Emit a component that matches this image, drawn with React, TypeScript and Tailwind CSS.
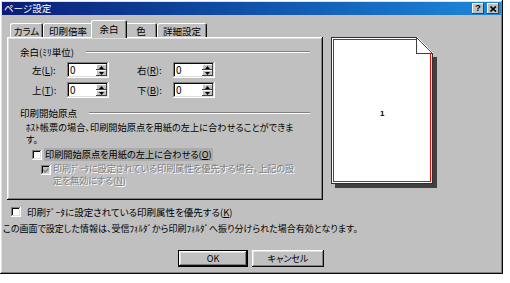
import React from "react";

const raised =
  "shadow-[inset_-1px_-1px_#0a0a0a,inset_1px_1px_#ffffff,inset_-2px_-2px_#808080,inset_2px_2px_#dfdfdf]";
const raisedThin = "shadow-[inset_-1px_-1px_#404040,inset_1px_1px_#ffffff]";
const sunken =
  "shadow-[inset_-1px_-1px_#ffffff,inset_1px_1px_#808080,inset_-2px_-2px_#dfdfdf,inset_2px_2px_#0a0a0a]";

function Arrow({ up }: { up?: boolean }) {
  return (
    <svg width="5" height="3" viewBox="0 0 5 3">
      <path d={up ? "M2.5 0 L5 3 L0 3Z" : "M0 0 L5 0 L2.5 3Z"} fill="#000" />
    </svg>
  );
}

function Spin() {
  return (
    <div className={`flex h-[16px] w-[42px] bg-white p-[2px] ${sunken}`}>
      <div className="flex-1 pl-[1px] text-[10px] leading-[12px]">0</div>
      <div className="flex w-[11px] flex-col">
        <div className={`flex h-[6px] items-center justify-center bg-[#c0c0c0] ${raisedThin}`}>
          <Arrow up />
        </div>
        <div className={`flex h-[6px] items-center justify-center bg-[#c0c0c0] ${raisedThin}`}>
          <Arrow />
        </div>
      </div>
    </div>
  );
}

function Acc({ c }: { c: string }) {
  return <span className="underline underline-offset-1">{c}</span>;
}

function GroupHeader({ text, gap }: { text: string; gap: string }) {
  return (
    <div className="flex h-[12px] items-center pl-[13px] pr-[13px]">
      <span className="whitespace-nowrap text-[9.5px] leading-[12px]">{text}</span>
      <div className={`h-[2px] flex-1 border-t border-b border-t-[#808080] border-b-white ${gap}`} />
    </div>
  );
}

function Tab({ label, w, selected }: { label: string; w: string; selected?: boolean }) {
  if (selected) {
    return (
      <div className={`relative z-10 -mx-[2px] -mb-[1px] flex h-[18px] items-start justify-center rounded-t-[2px] bg-[#c0c0c0] pt-[3px] shadow-[inset_1px_1px_#ffffff,inset_-1px_0_#0a0a0a,inset_-2px_0_#808080] ${w}`}>
        <span className="text-[9.5px] leading-[12px]">{label}</span>
      </div>
    );
  }
  return (
    <div className={`flex h-[14px] items-start justify-center rounded-t-[2px] pt-[2px] shadow-[inset_1px_1px_#ffffff,inset_-1px_0_#0a0a0a,inset_-2px_0_#808080] ${w}`}>
      <span className="text-[9.5px] leading-[12px]">{label}</span>
    </div>
  );
}

function Preview() {
  return (
    <svg width="108" height="152" viewBox="0 0 108 152" shapeRendering="crispEdges">
      <rect x="102" y="20" width="4" height="131" fill="#404040" />
      <rect x="4" y="147" width="102" height="4" fill="#404040" />
      <rect x="0" y="0" width="102" height="147" fill="#303030" />
      <rect x="1" y="1" width="100" height="145" fill="#ffffff" />
      <rect x="2" y="2" width="98" height="143" fill="#ff0000" />
      <rect x="3" y="3" width="96" height="141" fill="#ffffff" />
      <polygon points="86,0 103,0 103,17" fill="#c0c0c0" />
      <polygon points="85,0 86,0 86,16 102,16 102,17 85,17" fill="#404040" />
      <polygon points="86,0 86,16 102,16" fill="#ffffff" />
      <path d="M85.5 0.5 L101.5 16.5" stroke="#404040" fill="none" shapeRendering="auto" />
      <text x="49" y="79" fontSize="8" fontWeight="bold" fontFamily="'Liberation Sans', sans-serif" fill="#000">
        1
      </text>
    </svg>
  );
}

export default function App() {
  return (
    <div className="h-[283px] w-[510px] bg-white font-['Noto_Sans_CJK_JP',sans-serif] text-[9px] text-black [font-feature-settings:'palt']">
      <div className={`flex h-[274px] w-[503px] flex-col bg-[#c0c0c0] p-[2px] ${raised}`}>
        {/* title bar */}
        <div className="flex h-[13px] items-center justify-between bg-gradient-to-r from-[#0c1c78] to-[#1e88dc] pl-[2px] pr-[2px]">
          <span className="whitespace-nowrap text-[9.5px] leading-[13px] text-white">ページ設定</span>
          <div className="flex gap-[3px]">
            <div className={`flex h-[11px] w-[12px] items-center justify-center bg-[#c0c0c0] ${raisedThin}`}>
              <span className="font-['Liberation_Sans',sans-serif] text-[9px] font-bold leading-[9px]">?</span>
            </div>
            <div className={`flex h-[11px] w-[12px] items-center justify-center bg-[#c0c0c0] ${raisedThin}`}>
              <svg width="7" height="6" viewBox="0 0 7 6">
                <path d="M0.5 0.5 L6 5.5 M6 0.5 L0.5 5.5" stroke="#000" strokeWidth="1.6" />
              </svg>
            </div>
          </div>
        </div>

        {/* main */}
        <div className="mt-[6px] flex h-[179px]">
          <div className="ml-[5px] flex w-[316px] flex-col">
            <div className="flex h-[16px] items-end pl-[3px]">
              <Tab label="カラム" w="w-[33px]" />
              <Tab label="印刷倍率" w="w-[50px]" />
              <Tab label="余白" w="w-[36px]" selected />
              <Tab label="色" w="w-[32px]" />
              <Tab label="詳細設定" w="w-[50px]" />
            </div>
            <div className={`flex h-[163px] flex-col ${raised}`}>
              <div className="mt-[9px]">
                <GroupHeader text="余白(ﾐﾘ単位)" gap="ml-[12px]" />
              </div>
              <div className="mt-[4px] flex h-[16px] items-center pl-[25px]">
                <span className="w-[35px] whitespace-nowrap text-[9.5px] leading-[12px]">
                  左(<Acc c="L" />):
                </span>
                <Spin />
                <span className="ml-[28px] w-[36px] whitespace-nowrap text-[9.5px] leading-[12px]">
                  右(<Acc c="R" />):
                </span>
                <Spin />
              </div>
              <div className="mt-[4px] flex h-[16px] items-center pl-[25px]">
                <span className="w-[35px] whitespace-nowrap text-[9.5px] leading-[12px]">
                  上(<Acc c="T" />):
                </span>
                <Spin />
                <span className="ml-[28px] w-[36px] whitespace-nowrap text-[9.5px] leading-[12px]">
                  下(<Acc c="B" />):
                </span>
                <Spin />
              </div>
              <div className="mt-[9px]">
                <GroupHeader text="印刷開始原点" gap="ml-[12px]" />
              </div>
              <div className="mt-[2px] whitespace-nowrap pl-[19px] text-[9.2px] leading-[12px]">
                ﾎｽﾄ帳票の場合、印刷開始原点を用紙の左上に合わせることができま
                <br />
                す。
              </div>
              <div className="mt-[3px] flex h-[13px] items-center pl-[25px]">
                <div className={`h-[10px] w-[10px] bg-white ${sunken}`} />
                <span className="ml-[2px] whitespace-nowrap bg-[#acacac] px-[1px] text-[9.2px] leading-[13px]">
                  印刷開始原点を用紙の左上に合わせる(<Acc c="O" />)
                </span>
              </div>
              <div className="mt-[2px] flex items-start pl-[34px]">
                <div className={`mt-[2px] flex h-[10px] w-[10px] items-center justify-center bg-[#c0c0c0] ${sunken}`}>
                  <svg width="6" height="5" viewBox="0 0 6 5">
                    <path d="M0.5 2 L2.3 4 L5.5 0.5" stroke="#808080" strokeWidth="1.3" fill="none" />
                  </svg>
                </div>
                <span className="ml-[2px] whitespace-nowrap text-[9px] leading-[12px] text-[#808080] [text-shadow:1px_1px_0_#ffffff]">
                  印刷ﾃﾞｰﾀに設定されている印刷属性を優先する場合、上記の設
                  <br />
                  定を無効にする(<Acc c="N" />)
                </span>
              </div>
            </div>
          </div>
          <div className="ml-[8px] mt-[16px]">
            <Preview />
          </div>
        </div>

        {/* bottom checkbox */}
        <div className="ml-[9px] mt-[6px] flex h-[12px] items-center">
          <div className={`h-[10px] w-[10px] bg-white ${sunken}`} />
          <span className="ml-[6px] whitespace-nowrap text-[9.5px] leading-[12px]">
            印刷ﾃﾞｰﾀに設定されている印刷属性を優先する(<Acc c="K" />)
          </span>
        </div>
        <div className="ml-[1px] mt-[5px] h-[12px] whitespace-nowrap leading-[12px]">
          この画面で設定した情報は、受信ﾌｫﾙﾀﾞから印刷ﾌｫﾙﾀﾞへ振り分けられた場合有効となります。
        </div>

        {/* buttons */}
        <div className="ml-[176px] mt-[15px] flex gap-[4px]">
          <div className="h-[17px] w-[70px] border border-black">
            <div className={`flex h-full w-full items-center justify-center ${raised}`}>
              <span className="leading-[12px]">OK</span>
            </div>
          </div>
          <div className={`flex h-[17px] w-[72px] items-center justify-center ${raised}`}>
            <span className="leading-[12px]">キャンセル</span>
          </div>
        </div>
      </div>
    </div>
  );
}
